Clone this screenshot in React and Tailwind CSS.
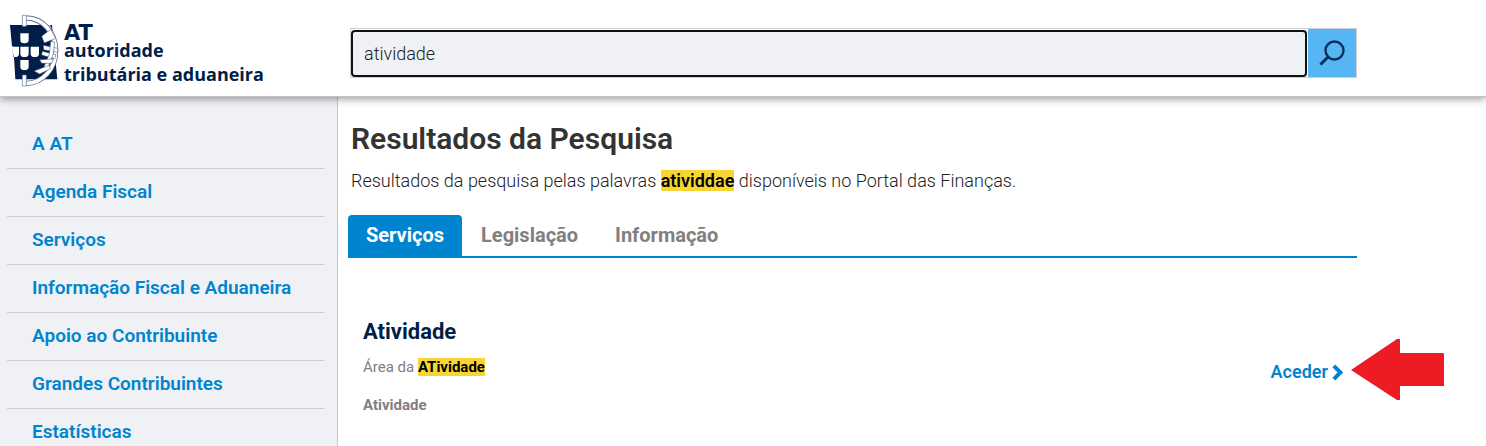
import { useState } from 'react';

const menu = [
  'A AT',
  'Agenda Fiscal',
  'Serviços',
  'Informação Fiscal e Aduaneira',
  'Apoio ao Contribuinte',
  'Grandes Contribuintes',
  'Estatísticas',
];

const tabs = ['Serviços', 'Legislação', 'Informação'];

function Emblem() {
  return (
    <svg viewBox="0 0 156 225" className="h-[75px] w-[52px] shrink-0" aria-hidden="true">
      <path fill="#011e49" d="M6 39H132L148 202H22L18 135H15L14 103H12Z" />
      {/* Armillary ring */}
      <path fill="#fff" d="M55 8A95 107 0 0 1 134 57L126 39L140 30V8Z" />
      <path fill="none" stroke="#5f7391" strokeWidth="16" d="M55 18A88 98 0 0 1 55 214" />
      <path fill="none" stroke="#fff" strokeWidth="11" d="M55 18A88 98 0 0 1 55 214" />
      <g fill="#fff" stroke="#33496d" strokeWidth="1.5">
        <path d="M101 73L128 52L143 79L109 93Z" />
        <path d="M106 100L149 109V121L107 113Z" />
        <path d="M103 118L144 128L140 140L101 129Z" />
        <path d="M128 88L140 90L136 126L116 178L105 172L124 126Z" />
        <path d="M95 143L136 141L131 154L101 154Z" />
        <path d="M78 177L124 160L128 170L95 186Z" />
      </g>
      <g fill="#fff" stroke="#5f7391" strokeWidth="2">
        <path d="M43 10H55V43H43Z" />
        <path d="M43 189H55V222H43Z" />
      </g>
      {/* Shields */}
      <g fill="#fff">
        <path d="M37 64H62V84Q62 94 49 94Q37 94 37 84Z" />
        <path d="M12 104H33V125Q33 135 20 135H17Z" />
        <path d="M37 104H62V125Q62 135 49 135Q37 135 37 125Z" />
        <path d="M68 104H93V125Q93 135 80 135Q68 135 68 125Z" />
        <path d="M37 144H62V164Q62 174 49 174Q37 174 37 164Z" />
      </g>
    </svg>
  );
}

function Header() {
  const [query, setQuery] = useState('atividade');

  return (
    <header className="relative z-10 flex h-[97px] items-start border-b border-[#c4c4c4] bg-white shadow-[0_2px_8px_rgba(0,0,0,0.4)]">
      <a href="#" className="flex w-[350px] shrink-0 gap-1 pt-3 pl-2 text-[#011e49]">
        <Emblem />
        <span className="flex flex-col whitespace-nowrap pt-[13px] font-['Open_Sans',sans-serif] text-[18px] leading-[22px] font-bold">
          <span className="font-['DejaVu_Sans',sans-serif] text-[21px] leading-4">AT</span>
          <span className="leading-[18px]">autoridade</span>
          <span className="pt-1">tributária e aduaneira</span>
        </span>
      </a>
      <form
        onSubmit={(e) => e.preventDefault()}
        className="mt-7 mr-[129px] flex h-[50px] flex-1 border border-[#cfcfcf]"
      >
        <input
          type="text"
          aria-label="Pesquisar"
          value={query}
          onChange={(e) => setQuery(e.target.value)}
          className="mt-px mr-px min-w-0 flex-1 rounded border-2 border-[#101010] bg-[#f0f1f4] px-[11px] text-[18px] font-light text-[#222] outline-none"
        />
        <button type="submit" aria-label="Procurar" className="flex w-12 items-center justify-center bg-[#55b6f3]">
          <svg viewBox="0 0 26 26" className="size-[26px]" fill="none" stroke="#0b2d5b" strokeWidth="2.4">
            <circle cx="15.5" cy="10.5" r="9" />
            <path d="M9 17L1.5 24.5" strokeWidth="3" />
          </svg>
        </button>
      </form>
    </header>
  );
}

function Sidebar() {
  return (
    <nav className="w-[338px] shrink-0 border-r border-[#c8c9cb] bg-[#f0f1f4] pt-6 pr-[13px] pl-[7px]">
      <ul>
        {menu.map((item) => (
          <li key={item} className="flex h-12 items-center border-b border-[#cccdd0] pb-px pl-[25px]">
            <a href="#" className="text-[19px] leading-6 font-semibold text-[#0084cf]">{item}</a>
          </li>
        ))}
      </ul>
    </nav>
  );
}

function Result() {
  return (
    <article className="mt-[60px] flex items-start justify-between pl-[15px]">
      <div>
        <h2 className="text-[22px] leading-7 font-bold text-[#011e49]">Atividade</h2>
        <p className="mt-[11px] text-[15px] leading-5 text-[#808080]">
          Área da <mark className="bg-[#f9d533] font-bold text-black">ATividade</mark>
        </p>
        <p className="mt-[18px] text-[15px] leading-5 font-bold text-[#808080]">Atividade</p>
      </div>
      <div className="relative mt-[42px] mr-[14px]">
        <a href="#" className="flex items-center gap-1 text-[18px] leading-6 font-semibold text-[#0084cf]">
          Aceder
          <svg viewBox="0 0 11 17" className="h-[17px] w-[11px]" fill="none" stroke="currentColor" strokeWidth="4">
            <path d="M1.8 1.8L8.4 8.5L1.8 15.2" />
          </svg>
        </a>
        <svg viewBox="0 0 94 62" className="absolute -top-[21px] left-full ml-2 h-[62px] w-[94px]" aria-hidden="true">
          <path fill="#ed1c24" d="M0 31L46 0H49V14H92L93 15V47H49V61H46Z" />
        </svg>
      </div>
    </article>
  );
}

export default function App() {
  const [active, setActive] = useState('Serviços');

  return (
    <div className="flex h-screen flex-col overflow-hidden bg-white font-[Roboto,sans-serif]">
      <Header />
      <div className="flex min-h-0 flex-1">
        <Sidebar />
        <main className="mr-[129px] ml-[10px] min-w-0 flex-1 pt-6">
          <h1 className="pl-[3px] text-[30px] leading-9 font-semibold text-[#333]">Resultados da Pesquisa</h1>
          <p className="mt-3 pl-[3px] text-[18px] leading-6 font-light text-[#222]">
            Resultados da pesquisa pelas palavras{' '}
            <mark className="bg-[#f9d533] font-semibold text-black">atividdae</mark> disponíveis no Portal das Finanças.
          </p>
          <div role="tablist" className="mt-[22px] flex gap-px border-b-2 border-[#0084cf]">
            {tabs.map((tab) => (
              <button
                key={tab}
                role="tab"
                type="button"
                aria-selected={tab === active}
                onClick={() => setActive(tab)}
                className={`h-[41px] rounded-t px-[18px] pb-0.5 text-[20px] font-bold ${
                  tab === active ? 'bg-[#0084cf] text-white' : 'text-[#808080]'
                }`}
              >
                {tab}
              </button>
            ))}
          </div>
          <Result />
        </main>
      </div>
    </div>
  );
}
